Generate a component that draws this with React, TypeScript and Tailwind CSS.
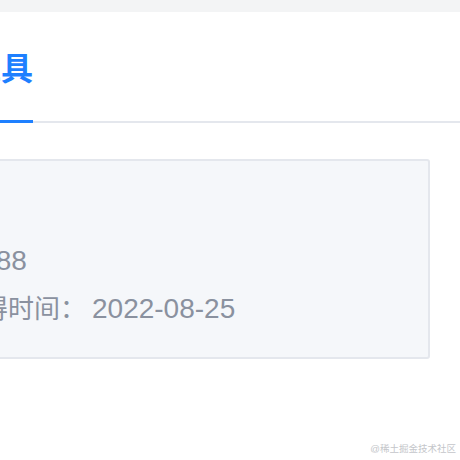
import React from "react";

const font = { fontFamily: '"Liberation Sans", "Noto Sans CJK SC", sans-serif' };

export default function App() {
  return (
    <div className="relative h-[460px] w-[460px] overflow-hidden bg-white" style={font}>
      {/* top strip */}
      <div className="h-3 bg-[#f3f4f5]" />

      {/* tab header */}
      <div className="mt-[38px] flex border-b-2 border-[#e4e7ed]">
        <div className="-ml-[31px] flex flex-col">
          <span className="whitespace-nowrap text-[32px] font-bold leading-[38px] text-[#1e80ff]">工具</span>
          <div className="-mb-[2px] mt-[32px] h-[3px] bg-[#1e80ff]" />
        </div>
      </div>

      {/* badge info card */}
      <div className="-ml-[100px] mr-[30px] mt-[36px] rounded-[3px] border-2 border-[#e4e7ed] bg-[#f5f7fa] pb-[24px] pl-[54px] pt-[76px] text-[28px] leading-[48px] text-[#8a919f]">
        <div className="-ml-[10px] whitespace-nowrap">NO.88</div>
        <div className="flex whitespace-nowrap">
          <span className="w-[130px] shrink-0 text-[26px]">获得时间：</span>
          <span className="ml-[6px]">2022-08-25</span>
        </div>
      </div>

      <div className="absolute bottom-[4px] right-[4px] whitespace-nowrap text-[9.5px] text-[#c4c6ca]">@稀土掘金技术社区</div>
    </div>
  );
}
